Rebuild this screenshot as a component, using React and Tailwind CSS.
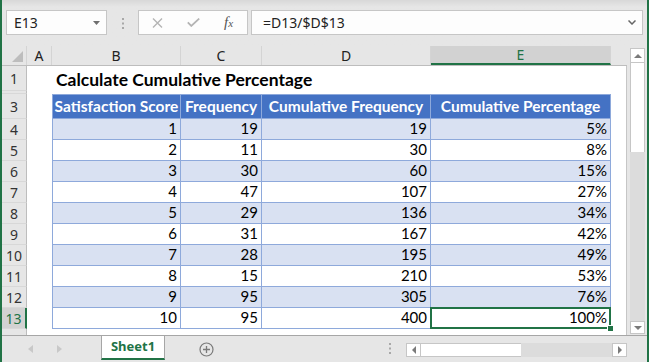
import React from 'react';

const rows = [
  [1, 19, 19, '5%'],
  [2, 11, 30, '8%'],
  [3, 30, 60, '15%'],
  [4, 47, 107, '27%'],
  [5, 29, 136, '34%'],
  [6, 31, 167, '42%'],
  [7, 28, 195, '49%'],
  [8, 15, 210, '53%'],
  [9, 95, 305, '76%'],
  [10, 95, 400, '100%'],
];

const RowHead = ({ n, active, className = '' }) => (
  <div
    className={`w-[25px] shrink-0 flex items-center justify-center border-b border-b-[#d8d8d8] ${
      active ? 'bg-[#d2d2d2] text-[#217346] border-r-2 border-r-[#217346]' : 'border-r border-r-[#bdbdbd] text-[#333]'
    } ${className}`}
  >
    {n}
  </div>
);

const ColHead = ({ label, w, active }) => (
  <div
    className={`${w} shrink-0 h-full flex items-center justify-center border-r border-r-[#d4d4d4] ${
      active ? 'bg-[#d2d2d2] text-[#217346] border-b-2 border-b-[#217346]' : 'text-[#222]'
    }`}
  >
    {label}
  </div>
);

const Cell = ({ w, first, className = '', children }) => (
  <div
    className={`${w} shrink-0 relative flex items-end justify-end pr-[3px] pb-[1px] border-r border-b border-[#8ea9db] ${
      first ? 'border-l' : ''
    } ${className}`}
  >
    {children}
  </div>
);

const HeadCell = ({ w, first, children }) => (
  <div
    className={`${w} shrink-0 flex items-center justify-center bg-[#4472c4] text-white font-bold border-t border-r border-b border-[#8ea9db] ${
      first ? 'border-l' : ''
    }`}
  >
    {children}
  </div>
);

export default function App() {
  return (
    <div className="w-[649px] h-[362px] overflow-hidden flex flex-col bg-[#e6e6e6] border-x-2 border-[#217346] font-['Noto_Sans',sans-serif] text-[13px]">
      {/* formula bar */}
      <div className="h-[46px] shrink-0 flex items-start pt-[10px] pl-[4px] pr-[4px] bg-linear-to-b from-[#d8d8d8] to-[#e6e6e6] to-15%">
        <div className="w-[101px] h-[25px] flex items-center justify-between pl-[7px] pr-[6px] bg-[#fdfdfd] border border-[#c6c6c6] text-[14px] text-[#222]">
          <span>E13</span>
          <svg width="7" height="4" viewBox="0 0 7 4">
            <path d="M0 0h7L3.5 4z" fill="#6f6f6f" />
          </svg>
        </div>
        <svg className="ml-[14px] mt-[8px]" width="4" height="11" viewBox="0 0 4 11">
          <rect x="1" y="0" width="2" height="2" fill="#a8a8a8" />
          <rect x="1" y="4.5" width="2" height="2" fill="#a8a8a8" />
          <rect x="1" y="9" width="2" height="2" fill="#a8a8a8" />
        </svg>
        <div className="ml-[13px] w-[110px] h-[25px] flex items-center bg-[#fdfdfd] border border-[#c6c6c6]">
          <svg className="ml-[13px]" width="11" height="10" viewBox="0 0 11 10">
            <path d="M1 0.5l9 9M10 0.5l-9 9" stroke="#b4b4b4" strokeWidth="1.4" />
          </svg>
          <svg className="ml-[24px]" width="13" height="9" viewBox="0 0 13 9">
            <path d="M0.8 4.3l3.5 3.6L12.2 0.6" stroke="#b4b4b4" strokeWidth="1.8" fill="none" />
          </svg>
          <span className="ml-[24px] font-['Liberation_Serif',serif] italic text-[15px] text-[#555] leading-none">
            f<span className="text-[11px]">x</span>
          </span>
        </div>
        <div className="ml-[3px] flex-1 h-[25px] flex items-center justify-between pl-[11px] pr-[6px] bg-[#fdfdfd] border border-[#c6c6c6] text-[14px] text-[#222]">
          <span>=D13/$D$13</span>
          <svg width="8" height="5" viewBox="0 0 8 5">
            <path d="M0.5 0.5L4 4l3.5-3.5" stroke="#666" strokeWidth="1.5" fill="none" />
          </svg>
        </div>
      </div>

      {/* sheet */}
      <div className="flex-1 flex min-h-0">
        <div className="w-[625px] shrink-0 flex flex-col">
          {/* column headers */}
          <div className="h-[20px] shrink-0 flex border-b border-[#bdbdbd] text-[14px]">
            <div className="w-[25px] shrink-0 h-full border-r border-r-[#d4d4d4] flex items-end justify-end pr-[3px] pb-[3px]">
              <svg width="11" height="11" viewBox="0 0 11 11">
                <path d="M11 0v11H0z" fill="#bdbdbd" />
              </svg>
            </div>
            <ColHead label="A" w="w-[25px]" />
            <ColHead label="B" w="w-[129px]" />
            <ColHead label="C" w="w-[81px]" />
            <ColHead label="D" w="w-[169px]" />
            <ColHead label="E" w="w-[180px]" active />
            <div className="flex-1" />
          </div>

          <div className="flex-1 flex flex-col bg-white border-r border-[#c6c6c6] text-[14px]">
            {/* row 1 */}
            <div className="h-[25px] flex shrink-0">
              <RowHead n={1} className="bg-[#e6e6e6]" />
              <div className="w-[25px] shrink-0" />
              <div className="flex-1 flex items-end pl-[4px] font-['Lato',sans-serif] font-bold text-[17.5px] text-black leading-[22px]">
                Calculate Cumulative Percentage
              </div>
            </div>
            {/* row 2 (hidden) */}
            <div className="h-[3px] flex shrink-0">
              <RowHead n="" className="bg-[#e6e6e6]" />
            </div>
            {/* row 3 */}
            <div className="h-[25px] flex shrink-0 font-['Lato',sans-serif] text-[15.5px]">
              <RowHead n={3} className="bg-[#e6e6e6] font-['Noto_Sans',sans-serif] text-[14px]" />
              <div className="w-[25px] shrink-0" />
              <HeadCell w="w-[129px]" first>Satisfaction Score</HeadCell>
              <HeadCell w="w-[81px]">Frequency</HeadCell>
              <HeadCell w="w-[169px]">Cumulative Frequency</HeadCell>
              <HeadCell w="w-[180px]">Cumulative Percentage</HeadCell>
            </div>
            {rows.map((r, i) => {
              const last = i === rows.length - 1;
              const bg = i % 2 === 0 ? 'bg-[#d9e1f2]' : 'bg-white';
              return (
                <div key={i} className="h-[21px] flex shrink-0 font-['Lato',sans-serif] text-[15px] text-black leading-[19px]">
                  <RowHead
                    n={i + 4}
                    active={last}
                    className={`font-['Noto_Sans',sans-serif] text-[14px] ${last ? '' : 'bg-[#e6e6e6]'}`}
                  />
                  <div className="w-[25px] shrink-0" />
                  <Cell w="w-[129px]" first className={bg}>{r[0]}</Cell>
                  <Cell w="w-[81px]" className={bg}>{r[1]}</Cell>
                  <Cell w="w-[169px]" className={bg}>{r[2]}</Cell>
                  <Cell w="w-[180px]" className={bg}>
                    {r[3]}
                    {last && (
                      <>
                        <div className="absolute -left-[1px] -top-[1px] -right-[1px] -bottom-[1px] border-2 border-[#217346]" />
                        <div className="absolute -right-[4px] -bottom-[4px] w-[7px] h-[7px] bg-[#217346] border border-white" />
                      </>
                    )}
                  </Cell>
                </div>
              );
            })}
            {/* partial row 14 */}
            <div className="flex-1 flex">
              <div className="w-[25px] shrink-0 bg-[#e6e6e6] border-r border-[#bdbdbd]" />
            </div>
          </div>
        </div>
        <div className="w-[3px] shrink-0" />
        {/* vertical scrollbar */}
        <div className="w-[15px] shrink-0 flex flex-col mt-[2px] mb-[1px]">
          <div className="h-[15px] shrink-0 bg-white border border-[#c6c6c6] flex items-center justify-center">
            <svg width="8" height="4" viewBox="0 0 8 4">
              <path d="M0 4L4 0l4 4z" fill="#7a7a7a" />
            </svg>
          </div>
          <div className="h-[89px] shrink-0 bg-white border-x border-[#c6c6c6]" />
          <div className="flex-1 bg-[#dcdcdc]" />
          <div className="h-[13px] shrink-0 bg-white border border-[#c6c6c6] flex items-center justify-center">
            <svg width="8" height="4" viewBox="0 0 8 4">
              <path d="M0 0h8L4 4z" fill="#7a7a7a" />
            </svg>
          </div>
        </div>
        <div className="w-[2px] shrink-0" />
      </div>

      {/* sheet tabs */}
      <div className="h-[27px] shrink-0 flex border-t border-[#a6a6a6]">
        <div className="w-[99px] shrink-0 flex items-start pt-[9px]">
          <svg className="ml-[26px]" width="5" height="8" viewBox="0 0 5 8">
            <path d="M5 0v8L0 4z" fill="#c8c8c8" />
          </svg>
          <svg className="ml-[24px]" width="5" height="8" viewBox="0 0 5 8">
            <path d="M0 0v8l5-4z" fill="#c8c8c8" />
          </svg>
        </div>
        <div className="w-[64px] h-[24px] shrink-0 bg-white border-x border-[#a6a6a6] border-b-2 border-b-[#217346] flex items-center justify-center font-bold text-[13px] text-[#217346]">
          Sheet1
        </div>
        <div className="w-[27px] shrink-0" />
        <div className="w-[28px] shrink-0 flex items-start justify-center pt-[6px]">
          <svg width="15" height="15" viewBox="0 0 15 15">
            <circle cx="7.5" cy="7.5" r="6.5" stroke="#7a7a7a" strokeWidth="1.2" fill="none" />
            <path d="M7.5 4v7M4 7.5h7" stroke="#7a7a7a" strokeWidth="1.3" />
          </svg>
        </div>
        <div className="w-[169px] shrink-0" />
        <svg className="mt-[7px]" width="2" height="11" viewBox="0 0 2 11">
          <rect x="0" y="0" width="2" height="2" fill="#a8a8a8" />
          <rect x="0" y="4.5" width="2" height="2" fill="#a8a8a8" />
          <rect x="0" y="9" width="2" height="2" fill="#a8a8a8" />
        </svg>
        <div className="w-[15px] shrink-0" />
        <div className="w-[221px] h-[14px] mt-[7px] shrink-0 flex">
          <div className="w-[15px] shrink-0 bg-white border border-[#c6c6c6] flex items-center justify-center">
            <svg width="4" height="8" viewBox="0 0 4 8">
              <path d="M4 0v8L0 4z" fill="#7a7a7a" />
            </svg>
          </div>
          <div className="w-[100px] shrink-0 bg-white border-y border-[#c6c6c6]" />
          <div className="flex-1 bg-[#dcdcdc]" />
          <div className="w-[15px] shrink-0 bg-white border border-[#c6c6c6] flex items-center justify-center">
            <svg width="4" height="8" viewBox="0 0 4 8">
              <path d="M0 0v8l4-4z" fill="#7a7a7a" />
            </svg>
          </div>
        </div>
      </div>
    </div>
  );
}
